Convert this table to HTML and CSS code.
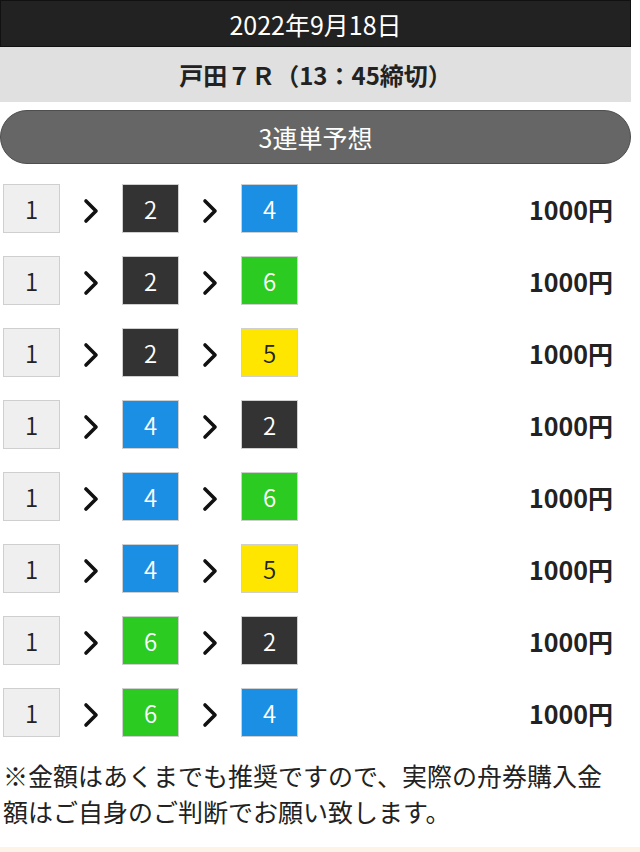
FILE: index.html
```html
<!DOCTYPE html>
<html lang="ja">
<head>
<meta charset="utf-8">
<title>3連単予想</title>
<link rel="stylesheet" href="styles.css">
</head>
<body>
<div class="page">
  <div class="date-bar">2022年9月18日</div>
  <div class="race-bar">戸田７Ｒ（13：45締切）</div>
  <div class="pill">3連単予想</div>
  <div class="rows">
    <div class="row"><span class="box b1">1</span><span class="arr"><svg viewBox="0 0 16 26"><polyline points="3,3 13,13 3,23"/></svg></span><span class="box b2">2</span><span class="arr"><svg viewBox="0 0 16 26"><polyline points="3,3 13,13 3,23"/></svg></span><span class="box b4">4</span><span class="amt">1000円</span></div>
    <div class="row"><span class="box b1">1</span><span class="arr"><svg viewBox="0 0 16 26"><polyline points="3,3 13,13 3,23"/></svg></span><span class="box b2">2</span><span class="arr"><svg viewBox="0 0 16 26"><polyline points="3,3 13,13 3,23"/></svg></span><span class="box b6">6</span><span class="amt">1000円</span></div>
    <div class="row"><span class="box b1">1</span><span class="arr"><svg viewBox="0 0 16 26"><polyline points="3,3 13,13 3,23"/></svg></span><span class="box b2">2</span><span class="arr"><svg viewBox="0 0 16 26"><polyline points="3,3 13,13 3,23"/></svg></span><span class="box b5">5</span><span class="amt">1000円</span></div>
    <div class="row"><span class="box b1">1</span><span class="arr"><svg viewBox="0 0 16 26"><polyline points="3,3 13,13 3,23"/></svg></span><span class="box b4">4</span><span class="arr"><svg viewBox="0 0 16 26"><polyline points="3,3 13,13 3,23"/></svg></span><span class="box b2">2</span><span class="amt">1000円</span></div>
    <div class="row"><span class="box b1">1</span><span class="arr"><svg viewBox="0 0 16 26"><polyline points="3,3 13,13 3,23"/></svg></span><span class="box b4">4</span><span class="arr"><svg viewBox="0 0 16 26"><polyline points="3,3 13,13 3,23"/></svg></span><span class="box b6">6</span><span class="amt">1000円</span></div>
    <div class="row"><span class="box b1">1</span><span class="arr"><svg viewBox="0 0 16 26"><polyline points="3,3 13,13 3,23"/></svg></span><span class="box b4">4</span><span class="arr"><svg viewBox="0 0 16 26"><polyline points="3,3 13,13 3,23"/></svg></span><span class="box b5">5</span><span class="amt">1000円</span></div>
    <div class="row"><span class="box b1">1</span><span class="arr"><svg viewBox="0 0 16 26"><polyline points="3,3 13,13 3,23"/></svg></span><span class="box b6">6</span><span class="arr"><svg viewBox="0 0 16 26"><polyline points="3,3 13,13 3,23"/></svg></span><span class="box b2">2</span><span class="amt">1000円</span></div>
    <div class="row"><span class="box b1">1</span><span class="arr"><svg viewBox="0 0 16 26"><polyline points="3,3 13,13 3,23"/></svg></span><span class="box b6">6</span><span class="arr"><svg viewBox="0 0 16 26"><polyline points="3,3 13,13 3,23"/></svg></span><span class="box b4">4</span><span class="amt">1000円</span></div>
  </div>
  <p class="note">※金額はあくまでも推奨ですので、実際の舟券購入金額はご自身のご判断でお願い致します。</p>
</div>
<div class="footer"></div>
</body>
</html>
```
FILE: styles.css
```css
html, body {
  margin: 0;
  padding: 0;
  background: #fff;
}
body {
  font-family: "Noto Sans CJK JP", "Noto Sans", sans-serif;
  color: #222;
}
.page {
  width: 631px;
}
.date-bar {
  height: 45px;
  background: #222;
  border: 1px solid #111;
  color: #fff;
  font-size: 25px;
  display: flex;
  align-items: center;
  justify-content: center;
}
.race-bar {
  height: 55px;
  background: #e0e0e0;
  font-size: 24px;
  font-weight: bold;
  color: #222;
  display: flex;
  align-items: center;
  justify-content: center;
}
.pill {
  margin-top: 8px;
  height: 52px;
  border-radius: 27px;
  background: #666;
  border: 1px solid #4e4e4e;
  color: #fff;
  font-size: 25px;
  display: flex;
  align-items: center;
  justify-content: center;
}
.rows {
  padding: 20px 18px 0 3px;
}
.row {
  display: flex;
  align-items: center;
  height: 49px;
  margin-bottom: 23px;
}
.box {
  box-sizing: border-box;
  width: 57px;
  height: 49px;
  border: 1px solid #cfcfcf;
  display: flex;
  align-items: center;
  justify-content: center;
  font-size: 24px;
  font-weight: 350;
  color: #fff;
}
.b1 { background: #efefef; color: #222; }
.b2 { background: #333; }
.b4 { background: #1a8fe3; }
.b5 { background: #ffe600; color: #222; }
.b6 { background: #2ccb22; }
.arr {
  width: 62px;
  display: flex;
  justify-content: center;
  padding-top: 4px;
}
.arr svg {
  width: 16px;
  height: 26px;
}
.arr polyline {
  fill: none;
  stroke: #111;
  stroke-width: 3.6;
  stroke-linecap: round;
  stroke-linejoin: round;
}
.amt {
  margin-left: auto;
  font-size: 25px;
  font-weight: bold;
  color: #222;
}
.note {
  margin: -3px 0 0;
  padding: 0 10px 0 3px;
  font-size: 25px;
  line-height: 36px;
  color: #222;
}
.footer {
  margin-top: 18px;
  height: 10px;
  background: #fdf3e6;
}
```
